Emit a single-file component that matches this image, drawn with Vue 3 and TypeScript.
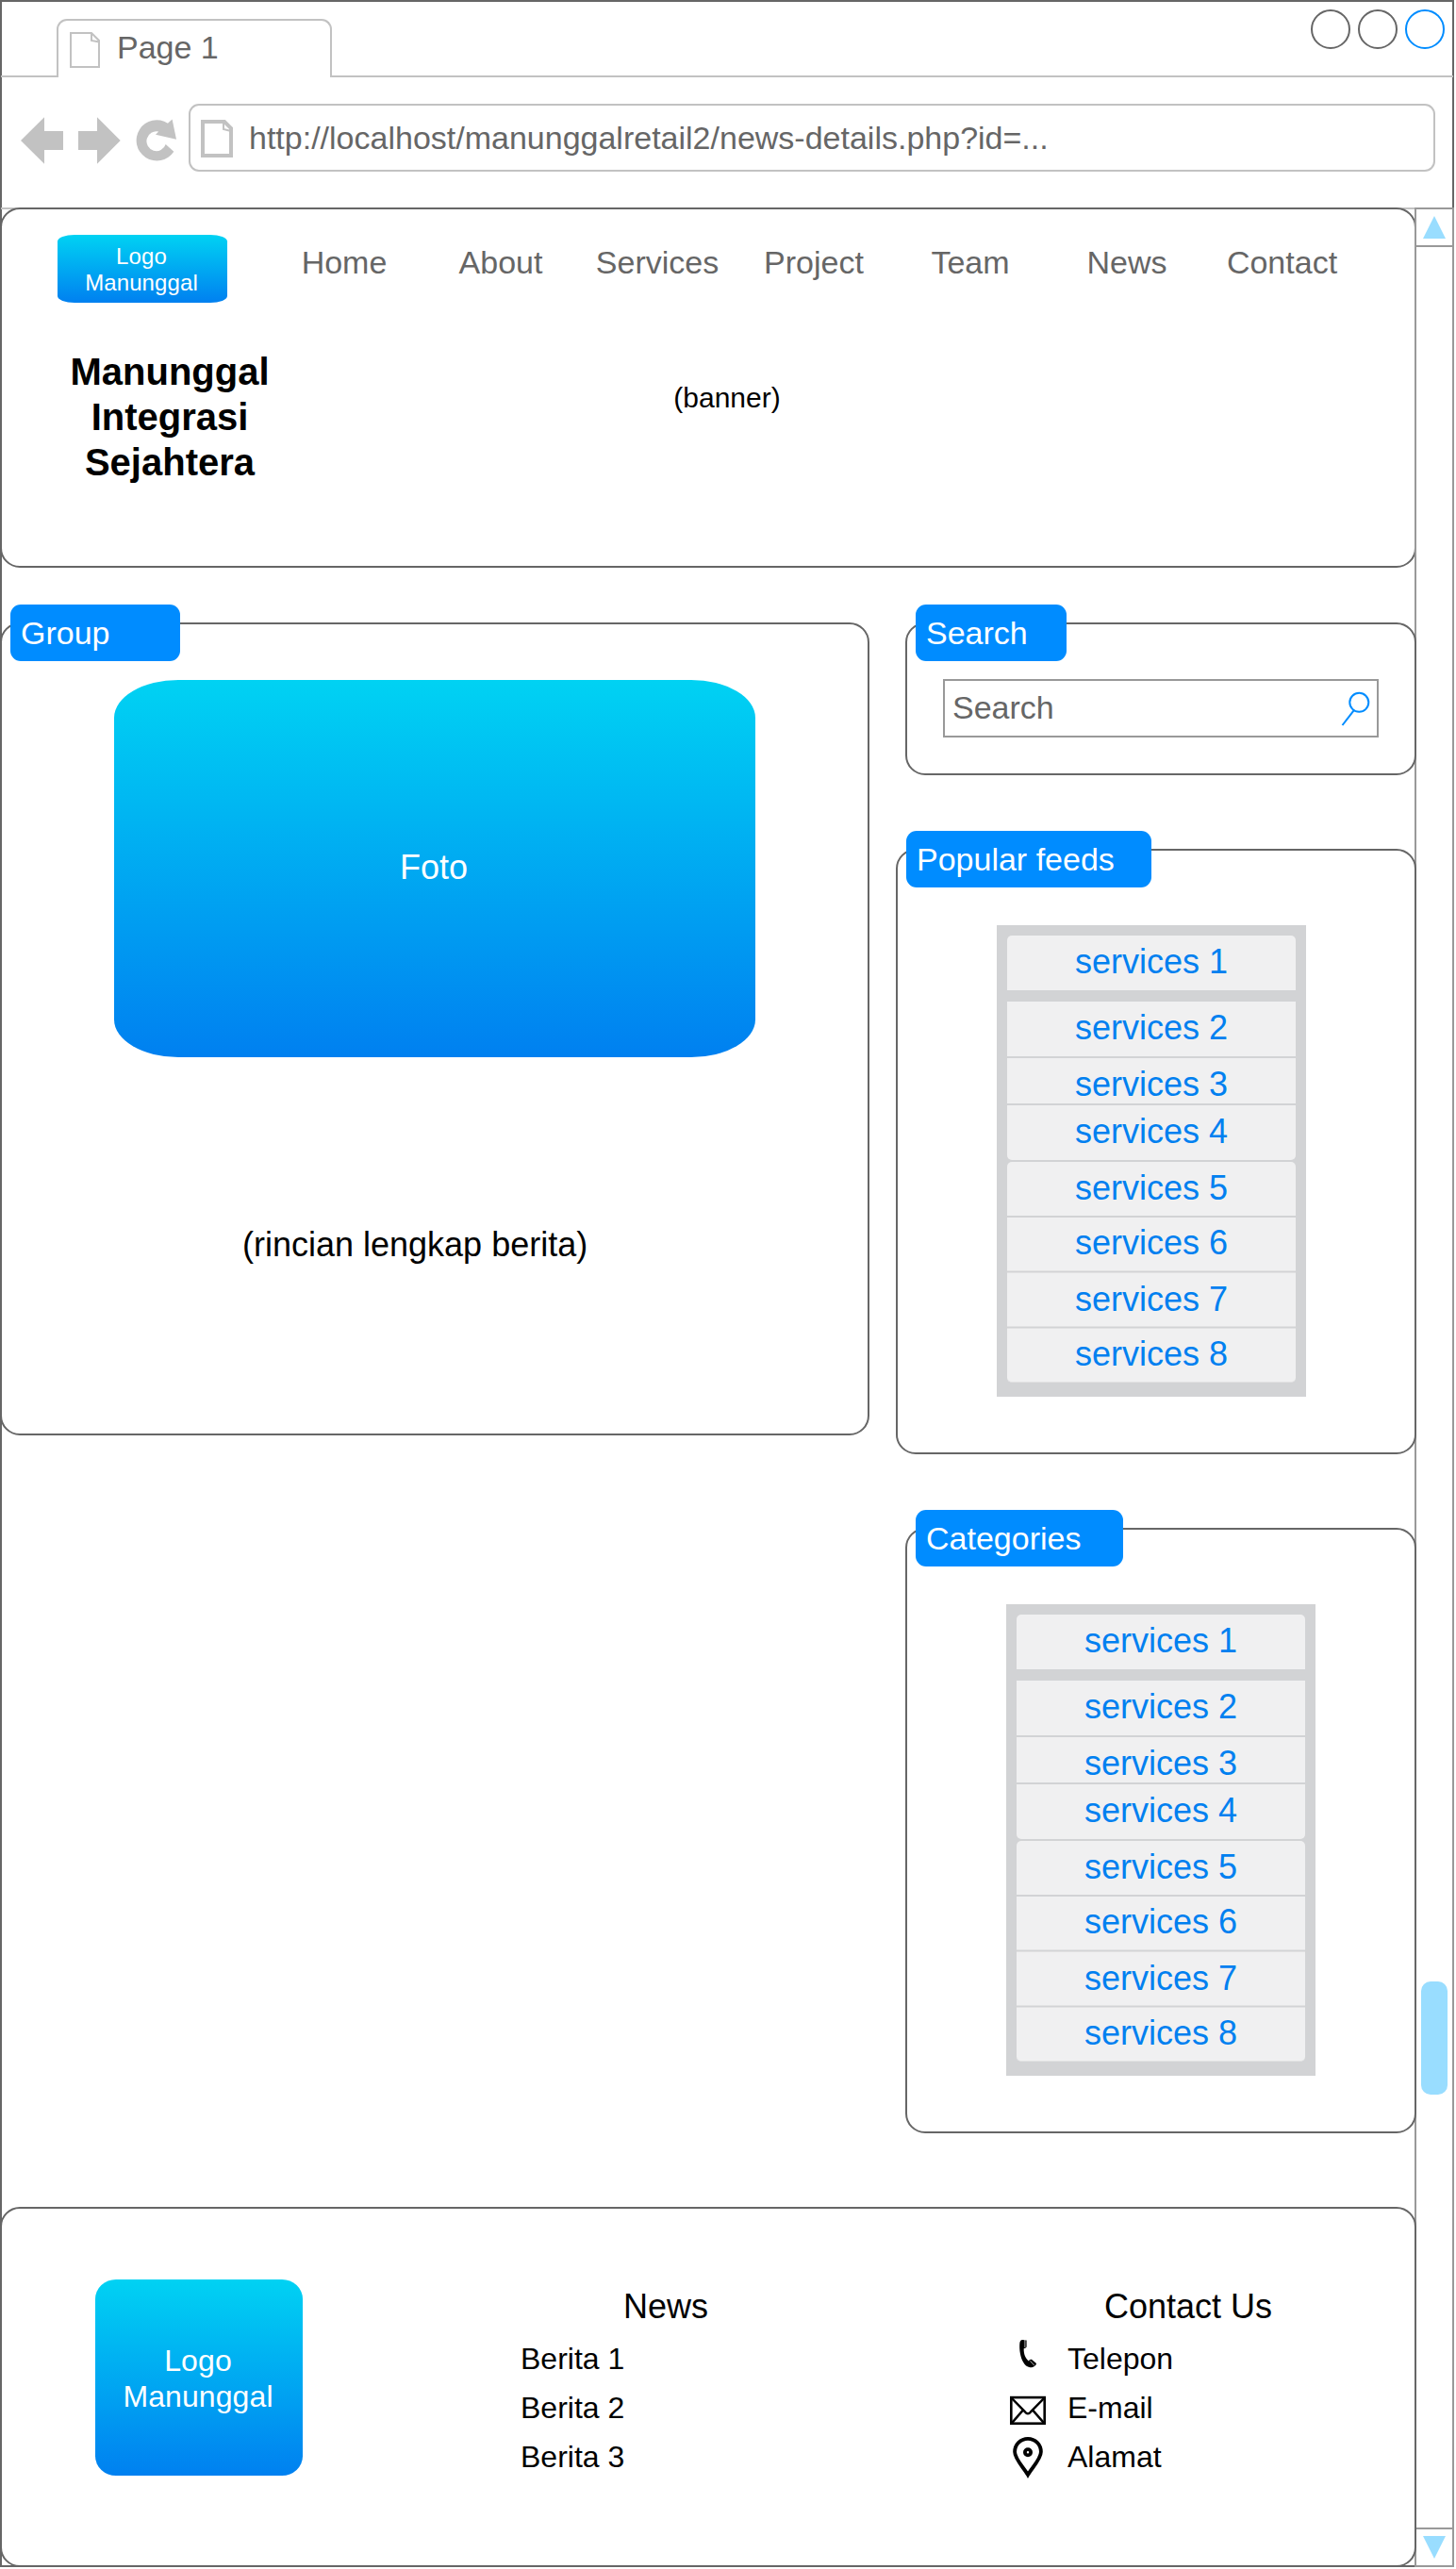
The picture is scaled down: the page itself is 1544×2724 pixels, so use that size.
<script setup lang="ts">
interface ServiceRow {
  label: string
  kind: string
}

const navItems: string[] = ['Home', 'About', 'Services', 'Project', 'Team', 'News', 'Contact']

const services: ServiceRow[] = [
  { label: 'services 1', kind: 'first' },
  { label: 'services 2', kind: 'plain' },
  { label: 'services 3', kind: 'short' },
  { label: 'services 4', kind: 'end' },
  { label: 'services 5', kind: 'start' },
  { label: 'services 6', kind: 'tight' },
  { label: 'services 7', kind: 'low' },
  { label: 'services 8', kind: 'last' },
]

const feeds = [
  { title: 'Popular feeds', name: 'popular' },
  { title: 'Categories', name: 'categories' },
]

const newsItems: string[] = ['Berita 1', 'Berita 2', 'Berita 3']
</script>

<template>
  <div class="browser">
    <header class="tabs">
      <div class="strip strip-left"></div>
      <div class="tab">
        <svg class="tab-icon" width="32" height="38" viewBox="0 0 32 38">
          <path d="M1 1H23L31 9V37H1Z M23 1V9L31 10.5" fill="none" stroke="#c2c2c2" stroke-width="2" />
        </svg>
        <span class="tab-title">Page 1</span>
      </div>
      <div class="strip strip-right">
        <i class="dot"></i>
        <i class="dot"></i>
        <i class="dot dot-blue"></i>
      </div>
    </header>

    <div class="toolbar">
      <svg class="controls" width="178" height="52" viewBox="22 124 178 52">
        <g fill="#c2c2c2">
          <path d="M22 149L47 124.3V139H67V159H47V173.7Z" />
          <path d="M127.7 149L103 124.3V139H83V159H103V173.7Z" />
          <path d="M177.9 130.7A21.6 21.6 0 1 0 184.3 160.7L175.7 153A10.4 10.4 0 1 1 168.2 139.6L165 142.7L187 147.8L182.6 126.6Z" />
        </g>
      </svg>
      <div class="url">
        <svg width="34" height="40" viewBox="0 0 34 40">
          <path d="M2 2H25L32 9V38H2Z" fill="none" stroke="#c2c2c2" stroke-width="4" />
          <path d="M24 2V10L32 12" fill="none" stroke="#c2c2c2" stroke-width="2" />
        </svg>
        <span class="url-text">http://localhost/manunggalretail2/news-details.php?id=...</span>
      </div>
    </div>

    <div class="viewport">
      <main class="content">
        <section class="card hero">
          <div class="hero-top">
            <div class="logo">Logo<br />Manunggal</div>
            <nav class="nav">
              <a v-for="item in navItems" :key="item">{{ item }}</a>
            </nav>
          </div>
          <div class="hero-body">
            <h1>Manunggal<br />Integrasi<br />Sejahtera</h1>
            <p class="banner">(banner)</p>
          </div>
        </section>

        <div class="columns">
          <section class="card group">
            <span class="tag tag-group">Group</span>
            <div class="photo">Foto</div>
            <p class="detail">(rincian lengkap berita)</p>
          </section>

          <aside class="side">
            <section class="card search">
              <span class="tag tag-search">Search</span>
              <div class="search-box">
                <span>Search</span>
                <svg width="32" height="40" viewBox="1422 732 32 40">
                  <circle cx="1441.3" cy="744.8" r="10" fill="none" stroke="#008cff" stroke-width="2" />
                  <path d="M1435.6 753.4L1423.5 769" stroke="#008cff" stroke-width="2" />
                </svg>
              </div>
            </section>

            <section v-for="feed in feeds" :key="feed.name" class="card feed" :class="feed.name">
              <span class="tag" :class="'tag-' + feed.name">{{ feed.title }}</span>
              <ul class="services">
                <li v-for="row in services" :key="row.label" :class="row.kind">{{ row.label }}</li>
              </ul>
            </section>
          </aside>
        </div>

        <footer class="card footer">
          <div class="logo logo-big">Logo<br />Manunggal</div>
          <div class="news">
            <h2>News</h2>
            <p v-for="item in newsItems" :key="item">{{ item }}</p>
          </div>
          <div class="contact">
            <h2>Contact Us</h2>
            <p>
              <svg width="38" height="52" viewBox="0 0 38 52">
                <path d="M10.3 10C10.5 7.4 11.5 6 13.2 6L17.6 6.4V13.6C17 15 15.6 15.2 14.7 15.2C14.4 21 16.5 25.5 19.8 28.4C20.5 27.4 21.6 26.6 22.9 26.8L28 31C27.6 33.6 24.8 35.4 21.3 35.2C18 34.6 15.8 32.8 14 29.4C11 24.5 9.8 16.5 10.3 10Z" />
                <path d="M15.9 6V14M21.4 28.4L26 33.4" stroke="#fff" stroke-width=".7" />
              </svg>
              <span>Telepon</span>
            </p>
            <p>
              <svg width="38" height="52" viewBox="0 0 38 52" fill="none" stroke="#000">
                <rect x="1.3" y="15.1" width="35.4" height="27.6" stroke-width="2.6" />
                <path d="M1.8 15.8L16 30.4Q19 34 22 30.4L36.2 15.8M1.8 42.4L13.8 28.6M36.2 42.4L24.2 28.6" stroke-width="2.4" />
              </svg>
              <span>E-mail</span>
            </p>
            <p>
              <svg width="38" height="52" viewBox="0 0 38 52" fill="none" stroke="#000">
                <path d="M19 45.2C15 38 5.1 28.5 5.1 20.8A13.9 14 0 0 1 32.9 20.8C32.9 28.5 23 38 19 45.2Z" stroke-width="3.8" />
                <circle cx="19" cy="21.3" r="3.1" stroke-width="3.8" />
              </svg>
              <span>Alamat</span>
            </p>
          </div>
        </footer>
      </main>

      <div class="scrollbar">
        <div class="scroll-end">
          <svg width="24" height="24" viewBox="0 0 24 24"><path d="M12 0L24 24H0Z" fill="#9df" /></svg>
        </div>
        <div class="thumb"></div>
        <div class="scroll-end scroll-down">
          <svg width="24" height="24" viewBox="0 0 24 24"><path d="M0 0H24L12 24Z" fill="#9df" /></svg>
        </div>
      </div>
    </div>
  </div>
</template>

<style>
body {
  margin: 0;
  background: #fff;
}
</style>

<style scoped>
* {
  box-sizing: border-box;
}

h1,
h2,
p,
ul {
  margin: 0;
  padding: 0;
  list-style: none;
  font-weight: 400;
}

svg {
  display: block;
  flex: none;
}

.browser {
  position: relative;
  width: 1542px;
  height: 2722px;
  overflow: hidden;
  background: #fff;
  color: #000;
  font-family: 'Liberation Sans', Arial, sans-serif;
  font-size: 34px;
  line-height: 40px;
  white-space: nowrap;
}

.browser::before {
  content: '';
  position: absolute;
  inset: 0;
  border: 2px solid #666;
}

.tabs {
  position: relative;
  display: flex;
  align-items: flex-end;
  height: 82px;
  padding: 0 1px;
}

.strip {
  border-bottom: 2px solid #c2c2c2;
}

.strip-left {
  width: 59px;
}

.strip-right {
  display: flex;
  flex: 1;
  gap: 8px;
  justify-content: flex-end;
  height: 72px;
  padding-right: 9px;
}

.dot {
  width: 42px;
  height: 42px;
  border: 2px solid #666;
  border-radius: 50%;
}

.dot-blue {
  border-color: #008cff;
}

.tab {
  display: flex;
  width: 292px;
  height: 62px;
  padding-left: 12px;
  border: 2px solid #c2c2c2;
  border-bottom: 0;
  border-radius: 11px 11px 0 0;
  color: #666;
}

.tab-icon {
  margin-top: 12px;
}

.tab-title {
  margin: 8px 0 0 18px;
}

.toolbar {
  position: relative;
  display: flex;
  height: 138px;
  padding: 28px 20px 0 22px;
}

.controls {
  margin-top: 14px;
}

.url {
  display: flex;
  align-items: center;
  flex: 1;
  height: 72px;
  padding-left: 11px;
  border: 2px solid #c2c2c2;
  border-radius: 11px;
  color: #666;
}

.url svg {
  margin-top: 2px;
}

.url-text {
  margin-left: 17px;
}

.viewport {
  position: relative;
  display: flex;
  height: 2502px;
}

.viewport::before {
  content: '';
  position: absolute;
  top: 0;
  left: 1px;
  width: 1540px;
  height: 2px;
  background: #c2c2c2;
}

.content {
  width: 1500px;
}

.card {
  position: relative;
  border: 2px solid #666;
  border-radius: 21px;
  background: #fff;
}

.hero {
  width: 1502px;
  height: 382px;
}

.hero-top {
  display: flex;
  height: 99px;
  padding: 27px 0 0 59px;
}

.logo {
  display: flex;
  align-items: center;
  justify-content: center;
  width: 180px;
  height: 72px;
  padding: 1px 2px 0 0;
  border-radius: 10%;
  background: linear-gradient(#00d2f3, #0080f0);
  color: #fff;
  font-size: 24px;
  line-height: 28px;
  letter-spacing: 0.1px;
  text-align: center;
}

.nav {
  display: flex;
  margin: 9px 0 0 41px;
  color: #666;
}

.nav a {
  width: 166px;
  text-align: center;
}

.nav a:last-child {
  padding-right: 3px;
}

.hero-body {
  display: flex;
  padding: 49px 0 0 48px;
}

.hero-body h1 {
  width: 260px;
  font-size: 40px;
  font-weight: 700;
  line-height: 48px;
  text-align: center;
}

.banner {
  width: 300px;
  margin: 32px 0 0 311px;
  font-size: 30px;
  text-align: center;
}

.columns {
  display: flex;
  justify-content: space-between;
  width: 1502px;
  height: 1738px;
  padding-top: 58px;
}

.group {
  width: 922px;
  height: 862px;
  padding: 59px 0 0 119px;
}

.tag {
  position: absolute;
  top: -21px;
  left: 9px;
  height: 60px;
  padding-left: 11px;
  border-radius: 11px;
  background: #008cff;
  color: #fff;
  line-height: 60px;
}

.tag-group {
  width: 180px;
}

.tag-search {
  width: 160px;
}

.tag-popular {
  width: 260px;
}

.tag-categories {
  width: 220px;
}

.photo {
  width: 680px;
  height: 400px;
  padding-right: 2px;
  border-radius: 10%;
  background: linear-gradient(#00d2f3, #0080f0);
  color: #fff;
  font-size: 36px;
  line-height: 398px;
  text-align: center;
}

.detail {
  margin: 179px 0 0 136px;
  font-size: 36px;
}

.side {
  display: flex;
  flex-direction: column;
  align-items: flex-end;
  gap: 78px;
}

.search {
  z-index: 2;
  width: 542px;
  height: 162px;
  padding: 58px 38px;
}

.search-box {
  display: flex;
  align-items: center;
  justify-content: space-between;
  width: 462px;
  height: 62px;
  padding: 0 6px 2px 8px;
  border: 2px solid #999;
  color: #666;
}

.search-box svg {
  margin-top: 4px;
}

.feed {
  z-index: 2;
  width: 542px;
  height: 642px;
  padding: 79px 0 0 105px;
}

.popular {
  width: 552px;
}

.services {
  width: 328px;
  height: 500px;
  padding: 11px;
  background: #d2d3d5;
  color: #0080f0;
  font-size: 36px;
  line-height: 55px;
  text-align: center;
}

.services li {
  height: 58px;
  margin-bottom: 2px;
  background: #f0f0f1;
}

.services .first {
  margin-bottom: 12px;
  border-radius: 5px 5px 0 0;
}

.services .short {
  height: 48px;
}

.services .end {
  border-radius: 0 0 5px 5px;
}

.services .start {
  height: 57px;
  border-radius: 5px 5px 0 0;
}

/* The lower separators fade by one pixel on each side. */
.services .tight,
.services .low {
  height: 57px;
  border-bottom: 1px solid #e2e2e3;
}

.services .tight {
  line-height: 53px;
}

.services .low,
.services .last {
  border-top: 1px solid #e2e2e3;
}

.services .low {
  height: 58px;
  margin-top: -1px;
  line-height: 55px;
}

.services .last {
  height: 58px;
  margin-top: -1px;
  border-bottom: 1px solid #e2e2e3;
  border-radius: 0 0 5px 5px;
  line-height: 53px;
}

.footer {
  z-index: 2;
  display: flex;
  width: 1502px;
  height: 382px;
  padding: 75px 0 0 99px;
}

.logo-big {
  width: 220px;
  height: 208px;
  padding-top: 2px;
  font-size: 32px;
  line-height: 38px;
}

.news,
.contact {
  padding-top: 1px;
  font-size: 32px;
  line-height: 52px;
}

.news {
  width: 519px;
  margin-left: 231px;
}

.footer h2 {
  height: 57px;
  font-size: 36px;
  line-height: 55px;
}

.news h2 {
  padding-left: 109px;
}

.contact h2 {
  padding-left: 100px;
}

.contact p {
  display: flex;
  gap: 23px;
}

.scrollbar {
  position: relative;
  z-index: 1;
  display: flex;
  flex-direction: column;
  width: 42px;
  border: 2px solid #999;
}

.scroll-end {
  height: 40px;
  padding: 7px 0 0 7px;
  border-bottom: 2px solid #999;
}

.scroll-down {
  margin-top: auto;
  padding-top: 7px;
  border-top: 2px solid #999;
  border-bottom: 0;
}

.thumb {
  width: 28px;
  height: 120px;
  margin: 1839px 0 0 5px;
  border-radius: 10px;
  background: #9df;
}
</style>
